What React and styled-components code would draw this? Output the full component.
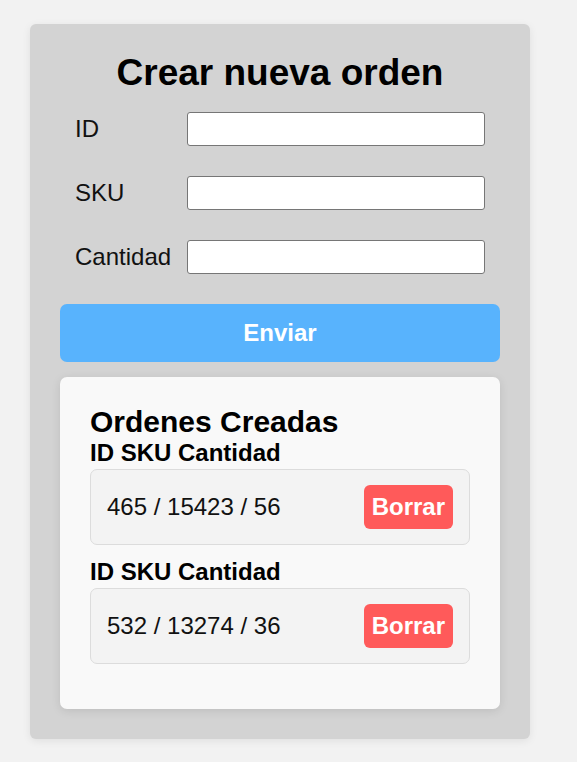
import React, { useState } from 'react';
import styled, { createGlobalStyle } from 'styled-components';

const GlobalStyle = createGlobalStyle`
    body {
        margin: 0;
        background-color: #f2f2f2;
        font-family: "Liberation Sans", Arial, sans-serif;
    }
`;

const Page = styled.div`
    padding: 24px 30px;
`;

const Card = styled.div`
    width: 500px;
    box-sizing: border-box;
    background-color: #d3d3d3;
    border-radius: 6px;
    padding: 28px 30px 30px;
    box-shadow: 0 2px 8px rgba(0, 0, 0, 0.08);
`;

const Title = styled.h1`
    margin: 0 0 18px;
    text-align: center;
    font-size: 37px;
    font-weight: bold;
    color: #000;
`;

const Form = styled.form`
    display: flex;
    flex-direction: column;
`;

const Row = styled.div`
    display: flex;
    align-items: center;
    padding: 0 15px;
    margin-bottom: 30px;
`;

const Label = styled.label`
    width: 112px;
    flex-shrink: 0;
    font-size: 24px;
    color: #111;
`;

const Input = styled.input`
    flex: 1;
    height: 34px;
    box-sizing: border-box;
    border: 1px solid #767676;
    border-radius: 3px;
    background: #fff;
    font-size: 18px;
    padding: 0 6px;
`;

const SubmitButton = styled.button`
    height: 58px;
    border: none;
    border-radius: 7px;
    background-color: #58b3fd;
    color: #fff;
    font-family: inherit;
    font-size: 24px;
    font-weight: bold;
    cursor: pointer;
`;

const OrdersPanel = styled.div`
    margin-top: 15px;
    background-color: #f9f9f9;
    border-radius: 7px;
    padding: 28px 30px 32px;
    box-shadow: 0 2px 10px rgba(0, 0, 0, 0.1);
`;

const PanelTitle = styled.h2`
    margin: 0;
    font-size: 30px;
    font-weight: bold;
    color: #000;
`;

const OrderGroup = styled.div`
    margin-bottom: 13px;
`;

const OrderHeader = styled.div`
    font-size: 24px;
    font-weight: bold;
    color: #000;
    margin-bottom: 2px;
`;

const OrderItem = styled.div`
    width: 380px;
    box-sizing: border-box;
    display: flex;
    align-items: center;
    justify-content: space-between;
    padding: 15px 16px;
    background-color: #f3f3f3;
    border: 1px solid #dcdcdc;
    border-radius: 7px;
    font-size: 24px;
    color: #111;
`;

const DeleteButton = styled.button`
    border: none;
    border-radius: 6px;
    padding: 8px 8px;
    background-color: #ff5a5a;
    color: #fff;
    font-family: inherit;
    font-size: 24px;
    font-weight: bold;
    cursor: pointer;
`;

const fields = [
    { name: 'id', label: 'ID' },
    { name: 'sku', label: 'SKU' },
    { name: 'cantidad', label: 'Cantidad' },
];

const initialOrders = [
    { id: 465, sku: 15423, cantidad: 56 },
    { id: 532, sku: 13274, cantidad: 36 },
];

const App = () => {
    const [orders, setOrders] = useState(initialOrders);

    return (
        <Page>
            <GlobalStyle />
            <Card>
                <Title>Crear nueva orden</Title>
                <Form onSubmit={(e) => e.preventDefault()}>
                    {fields.map((f) => (
                        <Row key={f.name}>
                            <Label htmlFor={f.name}>{f.label}</Label>
                            <Input id={f.name} type="text" />
                        </Row>
                    ))}
                    <SubmitButton type="submit">Enviar</SubmitButton>
                </Form>
                <OrdersPanel>
                    <PanelTitle>Ordenes Creadas</PanelTitle>
                    {orders.map((o, i) => (
                        <OrderGroup key={i}>
                            <OrderHeader>ID SKU Cantidad</OrderHeader>
                            <OrderItem>
                                <span>{o.id} / {o.sku} / {o.cantidad}</span>
                                <DeleteButton onClick={() => setOrders(orders.filter((_, j) => j !== i))}>
                                    Borrar
                                </DeleteButton>
                            </OrderItem>
                        </OrderGroup>
                    ))}
                </OrdersPanel>
            </Card>
        </Page>
    );
};

export default App;
